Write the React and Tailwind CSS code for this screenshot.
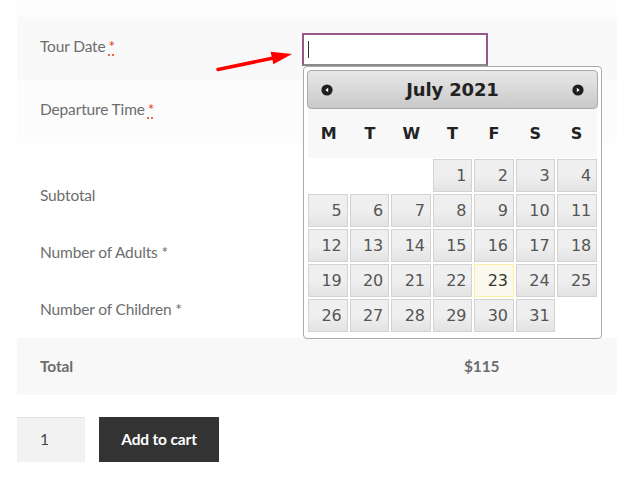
import React from "react";

const days = [
  [null, null, null, 1, 2, 3, 4],
  [5, 6, 7, 8, 9, 10, 11],
  [12, 13, 14, 15, 16, 17, 18],
  [19, 20, 21, 22, 23, 24, 25],
  [26, 27, 28, 29, 30, 31, null],
];

const weekdays = ["M", "T", "W", "T", "F", "S", "S"];

const Required = () => (
  <abbr className="ml-[3px] text-[#e2401c] no-underline [text-decoration:underline_dotted] [text-underline-offset:3px]">*</abbr>
);

const NavIcon = ({ dir }) => (
  <svg width="12" height="12" viewBox="0 0 12 12">
    <circle cx="6" cy="6" r="5.6" fill="#1e1e1e" />
    {dir === "prev" ? (
      <path d="M4.3 6 L7.2 3.8 L7.2 8.2 Z" fill="#fff" />
    ) : (
      <path d="M7.7 6 L4.8 3.8 L4.8 8.2 Z" fill="#fff" />
    )}
  </svg>
);

const DatePicker = () => (
  <div className="absolute left-[303px] top-[66px] w-[299px] h-[273px] bg-white border border-[#aaaaaa] rounded-[4px] p-[3px] font-['DejaVu_Sans',sans-serif]">
    {/* header */}
    <div className="h-[39px] flex items-center justify-between px-[13px] rounded-[4px] border border-[#aaaaaa] bg-gradient-to-b from-[#e8e8e8] to-[#c9c9c9]">
      <NavIcon dir="prev" />
      <span className="text-[18px] font-bold text-[#222]">July 2021</span>
      <NavIcon dir="next" />
    </div>
    <div className="px-[1px]">
      <div className="grid grid-cols-7 h-[49px] bg-[#f8f8f8] items-center">
        {weekdays.map((d, i) => (
          <span key={i} className="text-center text-[16px] font-bold text-[#222]">{d}</span>
        ))}
      </div>
      <div className="grid grid-cols-7 gap-x-[2px] gap-y-[2px] mt-[1px]">
        {days.flat().map((d, i) =>
          d === null ? (
            <div key={i} className="h-[33px]" />
          ) : d === 23 ? (
            <div key={i} className="h-[33px] flex items-center justify-end pr-[5px] border border-[#fcefa1] bg-[#fbf9ee] text-[16px] text-[#363636]">
              {d}
            </div>
          ) : (
            <div key={i} className="h-[33px] flex items-center justify-end pr-[5px] border border-[#d3d3d3] bg-gradient-to-b from-[#efefef] via-[#efefef] to-[#e3e3e3] text-[16px] text-[#555555]">
              {d}
            </div>
          )
        )}
      </div>
    </div>
  </div>
);

const Arrow = () => (
  <svg className="absolute left-0 top-0" width="630" height="100" viewBox="0 0 630 100">
    <line x1="218" y1="69.5" x2="276" y2="57.5" stroke="#ff0000" strokeWidth="3.5" strokeLinecap="round" />
    <path d="M292 54 L270.6 51.8 L273.4 64.2 Z" fill="#ff0000" />
  </svg>
);

const App = () => {
  return (
    <div className="relative w-[630px] h-[484px] bg-white font-['Lato','Noto_Sans',sans-serif] text-[15.5px] tracking-[-0.15px] text-[#6d6d6d]">
      <div className="mx-[17px] w-[600px]">
        {/* top sliver of previous row */}
        <div className="h-[17px] bg-[#fdfdfd]" />

        {/* Tour date */}
        <div className="h-[63px] flex bg-[#f9f9f9]">
          <div className="w-[285px] pl-[23px] pt-[17px] leading-[24px]">
            Tour Date<Required />
          </div>
          <div className="pt-[16px]">
            <div className="w-[186px] h-[33px] bg-white border-2 border-[#96588a] border-b-[#8a8a8a] flex items-center pl-[4px]">
              <span className="w-px h-[17px] bg-[#333]" />
            </div>
          </div>
        </div>

        {/* Departure time */}
        <div className="h-[63px] flex bg-[#fcfcfc]">
          <div className="w-[285px] pl-[23px] pt-[17px] leading-[24px]">
            Departure Time<Required />
          </div>
        </div>

        <div className="h-[24px]" />

        <div className="h-[57px] flex items-center pl-[23px]">Subtotal</div>
        <div className="h-[57px] flex items-center pl-[23px]">Number of Adults *</div>
        <div className="h-[57px] flex items-center pl-[23px]">Number of Children *</div>

        {/* Total */}
        <div className="h-[57px] flex items-center bg-[#f8f8f8] font-bold">
          <div className="w-[447px] pl-[23px]">Total</div>
          <div>$115</div>
        </div>

        {/* cart */}
        <div className="flex gap-[14px] mt-[22px]">
          <div className="w-[68px] h-[45px] bg-[#f2f2f2] flex items-center pl-[23px] text-[#43454b] shadow-[inset_0_1px_1px_rgba(0,0,0,0.08)]">
            1
          </div>
          <button className="w-[120px] h-[45px] bg-[#333333] text-white font-bold">
            Add to cart
          </button>
        </div>
      </div>

      <Arrow />
      <DatePicker />
    </div>
  );
};

export default App;
